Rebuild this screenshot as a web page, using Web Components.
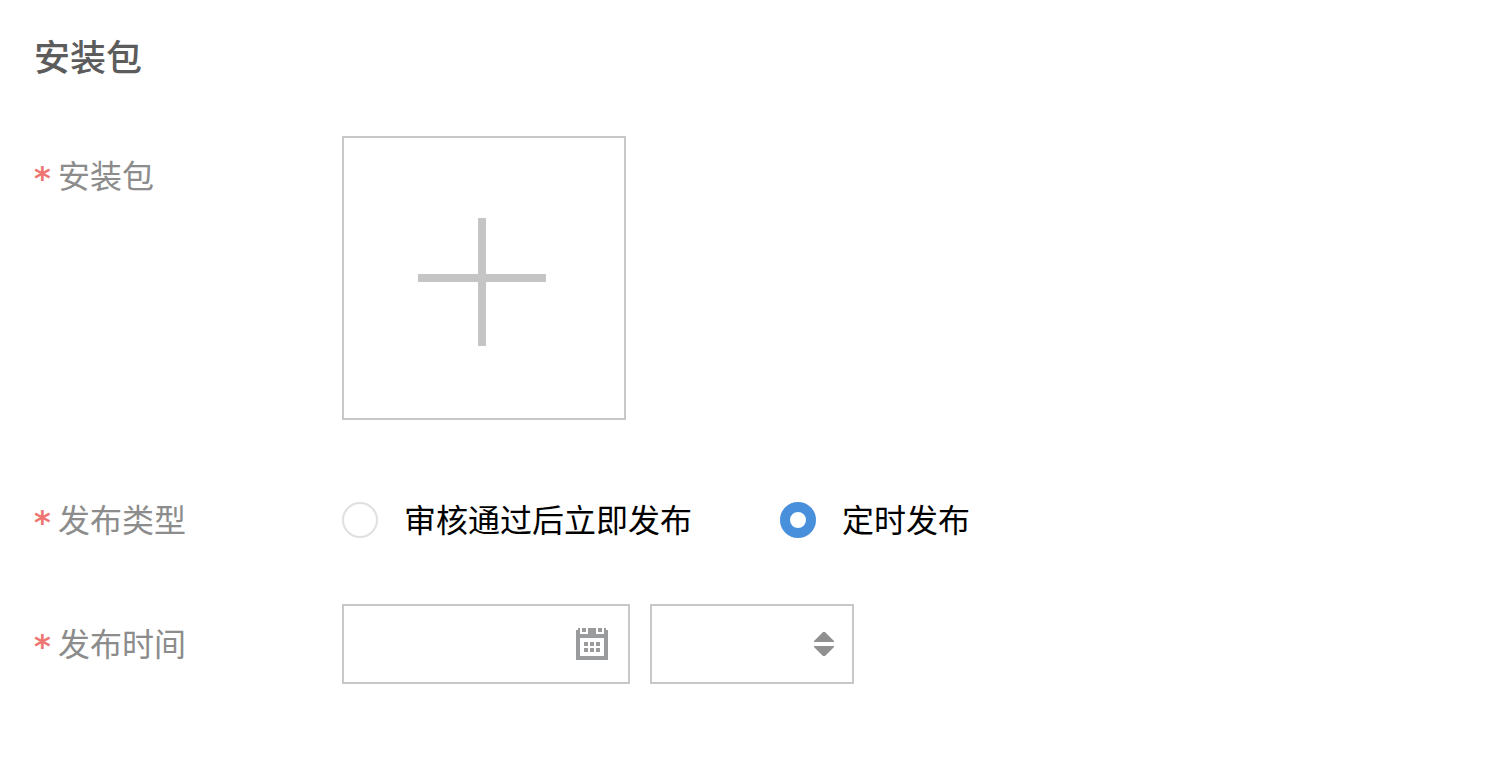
<!DOCTYPE html>
<html lang="zh-CN">
<head>
<meta charset="utf-8">
<meta name="viewport" content="width=device-width, initial-scale=1">
<title>安装包</title>
<style>
  body {
    margin: 0;
    background: #fff;
    color: #000;
    font: 32px/48px "Noto Sans CJK SC", sans-serif;
    --line: #c8c8c8;
    --label: #8c8c8c;
    --required: #ee7672;
    --accent: #4990dc;
  }
</style>
</head>
<body>
<release-form></release-form>

<template id="release-form">
  <style>
    :host { display: block; padding: 32px 34px; }
    h1 { margin: 0 0 58px; font-size: 36px; line-height: 46px; font-weight: 500; color: #5c5c5c; }
    form { display: grid; gap: 44px; }
    package-field { margin-bottom: 16px; }
  </style>
  <h1>安装包</h1>
  <form>
    <package-field></package-field>
    <publish-type></publish-type>
    <publish-time></publish-time>
  </form>
</template>

<template id="form-row">
  <style>
    :host { display: grid; grid-template-columns: 308px 1fr; align-items: start; }
    .label { display: flex; gap: 8px; line-height: 76px; color: var(--label); }
    .star { width: 16px; padding-top: 8px; line-height: 68px; font-family: "DejaVu Sans", sans-serif; font-weight: 700; color: var(--required); }
  </style>
  <div class="label"><span class="star" aria-hidden="true">*</span><slot name="label"></slot></div>
  <slot></slot>
</template>

<template id="package-field">
  <style>
    :host { display: block; }
    button { display: block; width: 284px; height: 284px; padding: 0; border: 2px solid var(--line); background: #fff; cursor: pointer; }
    svg { display: block; width: 100%; height: 100%; }
  </style>
  <form-row>
    <label slot="label" for="package">安装包</label>
    <button id="package" type="button">
      <svg viewBox="0 0 280 280" fill="#c5c5c5" aria-hidden="true">
        <path d="M134 80h8v56h60v8h-60v64h-8v-64H74v-8h60z"/>
      </svg>
    </button>
  </form-row>
</template>

<template id="publish-type">
  <style>
    :host { display: block; }
    .options { display: flex; flex-wrap: wrap; gap: 88px; }
    .options label { display: flex; align-items: center; gap: 26px; }
    .options span { padding-bottom: 4px; line-height: 76px; }
    input { appearance: none; flex: none; box-sizing: border-box; width: 36px; height: 36px; margin: 0; border: 2px solid #e0e0e0; border-radius: 50%; background: #fff; }
    input:checked { border: 10px solid var(--accent); }
  </style>
  <form-row>
    <span slot="label" id="type-label">发布类型</span>
    <div class="options" role="radiogroup" aria-labelledby="type-label">
      <label><input type="radio" name="type" value="now"><span>审核通过后立即发布</span></label>
      <label><input type="radio" name="type" value="timed" checked><span>定时发布</span></label>
    </div>
  </form-row>
</template>

<template id="publish-time">
  <style>
    :host { display: block; }
    .fields { display: flex; flex-wrap: wrap; gap: 20px; }
    .box { box-sizing: border-box; display: grid; align-items: center; height: 80px; border: 2px solid var(--line); }
    .date { width: 288px; }
    .time { width: 204px; }
    input, select { grid-area: 1 / 1; appearance: none; box-sizing: border-box; width: 100%; height: 100%; margin: 0; padding: 0 60px 0 16px; border: 0; border-radius: 0; background: none; font: inherit; color: inherit; }
    svg { grid-area: 1 / 1; justify-self: end; margin-right: 20px; pointer-events: none; }
    .time svg { margin-right: 18px; }
  </style>
  <form-row>
    <label slot="label" for="date">发布时间</label>
    <div class="fields">
      <div class="box date">
        <input id="date" type="text">
        <svg width="32" height="32" viewBox="0 0 32 32" fill="#999b9c" aria-hidden="true">
          <path fill-rule="evenodd" d="M0 2h2V0h2v6h8V0h8v6h8V0h2v2h2v30H0zM4 10v18h24V10z"/>
          <path d="M6 0h4v4H6zM22 0h4v4h-4zM8 14h4v4H8zM14 14h4v4h-4zM20 14h4v4h-4zM8 20h4v4H8zM14 20h4v4h-4zM20 20h4v4h-4z"/>
        </svg>
      </div>
      <div class="box time">
        <select aria-label="时间"><option></option></select>
        <svg width="20" height="24" viewBox="0 0 20 24" fill="#909090" aria-hidden="true">
          <path d="M9 0h2l9 9v1H0V9zM0 14h20v1l-9 9H9l-9-9z"/>
        </svg>
      </div>
    </div>
  </form-row>
</template>

<script>
  class TemplateElement extends HTMLElement {
    constructor() {
      super();
      const template = document.getElementById(this.localName);
      this.attachShadow({ mode: "open" }).append(document.importNode(template.content, true));
    }
  }
  customElements.define("form-row", class FormRow extends TemplateElement {});
  customElements.define("package-field", class PackageField extends TemplateElement {});
  customElements.define("publish-type", class PublishType extends TemplateElement {});
  customElements.define("publish-time", class PublishTime extends TemplateElement {});
  customElements.define("release-form", class ReleaseForm extends TemplateElement {});
</script>
</body>
</html>
